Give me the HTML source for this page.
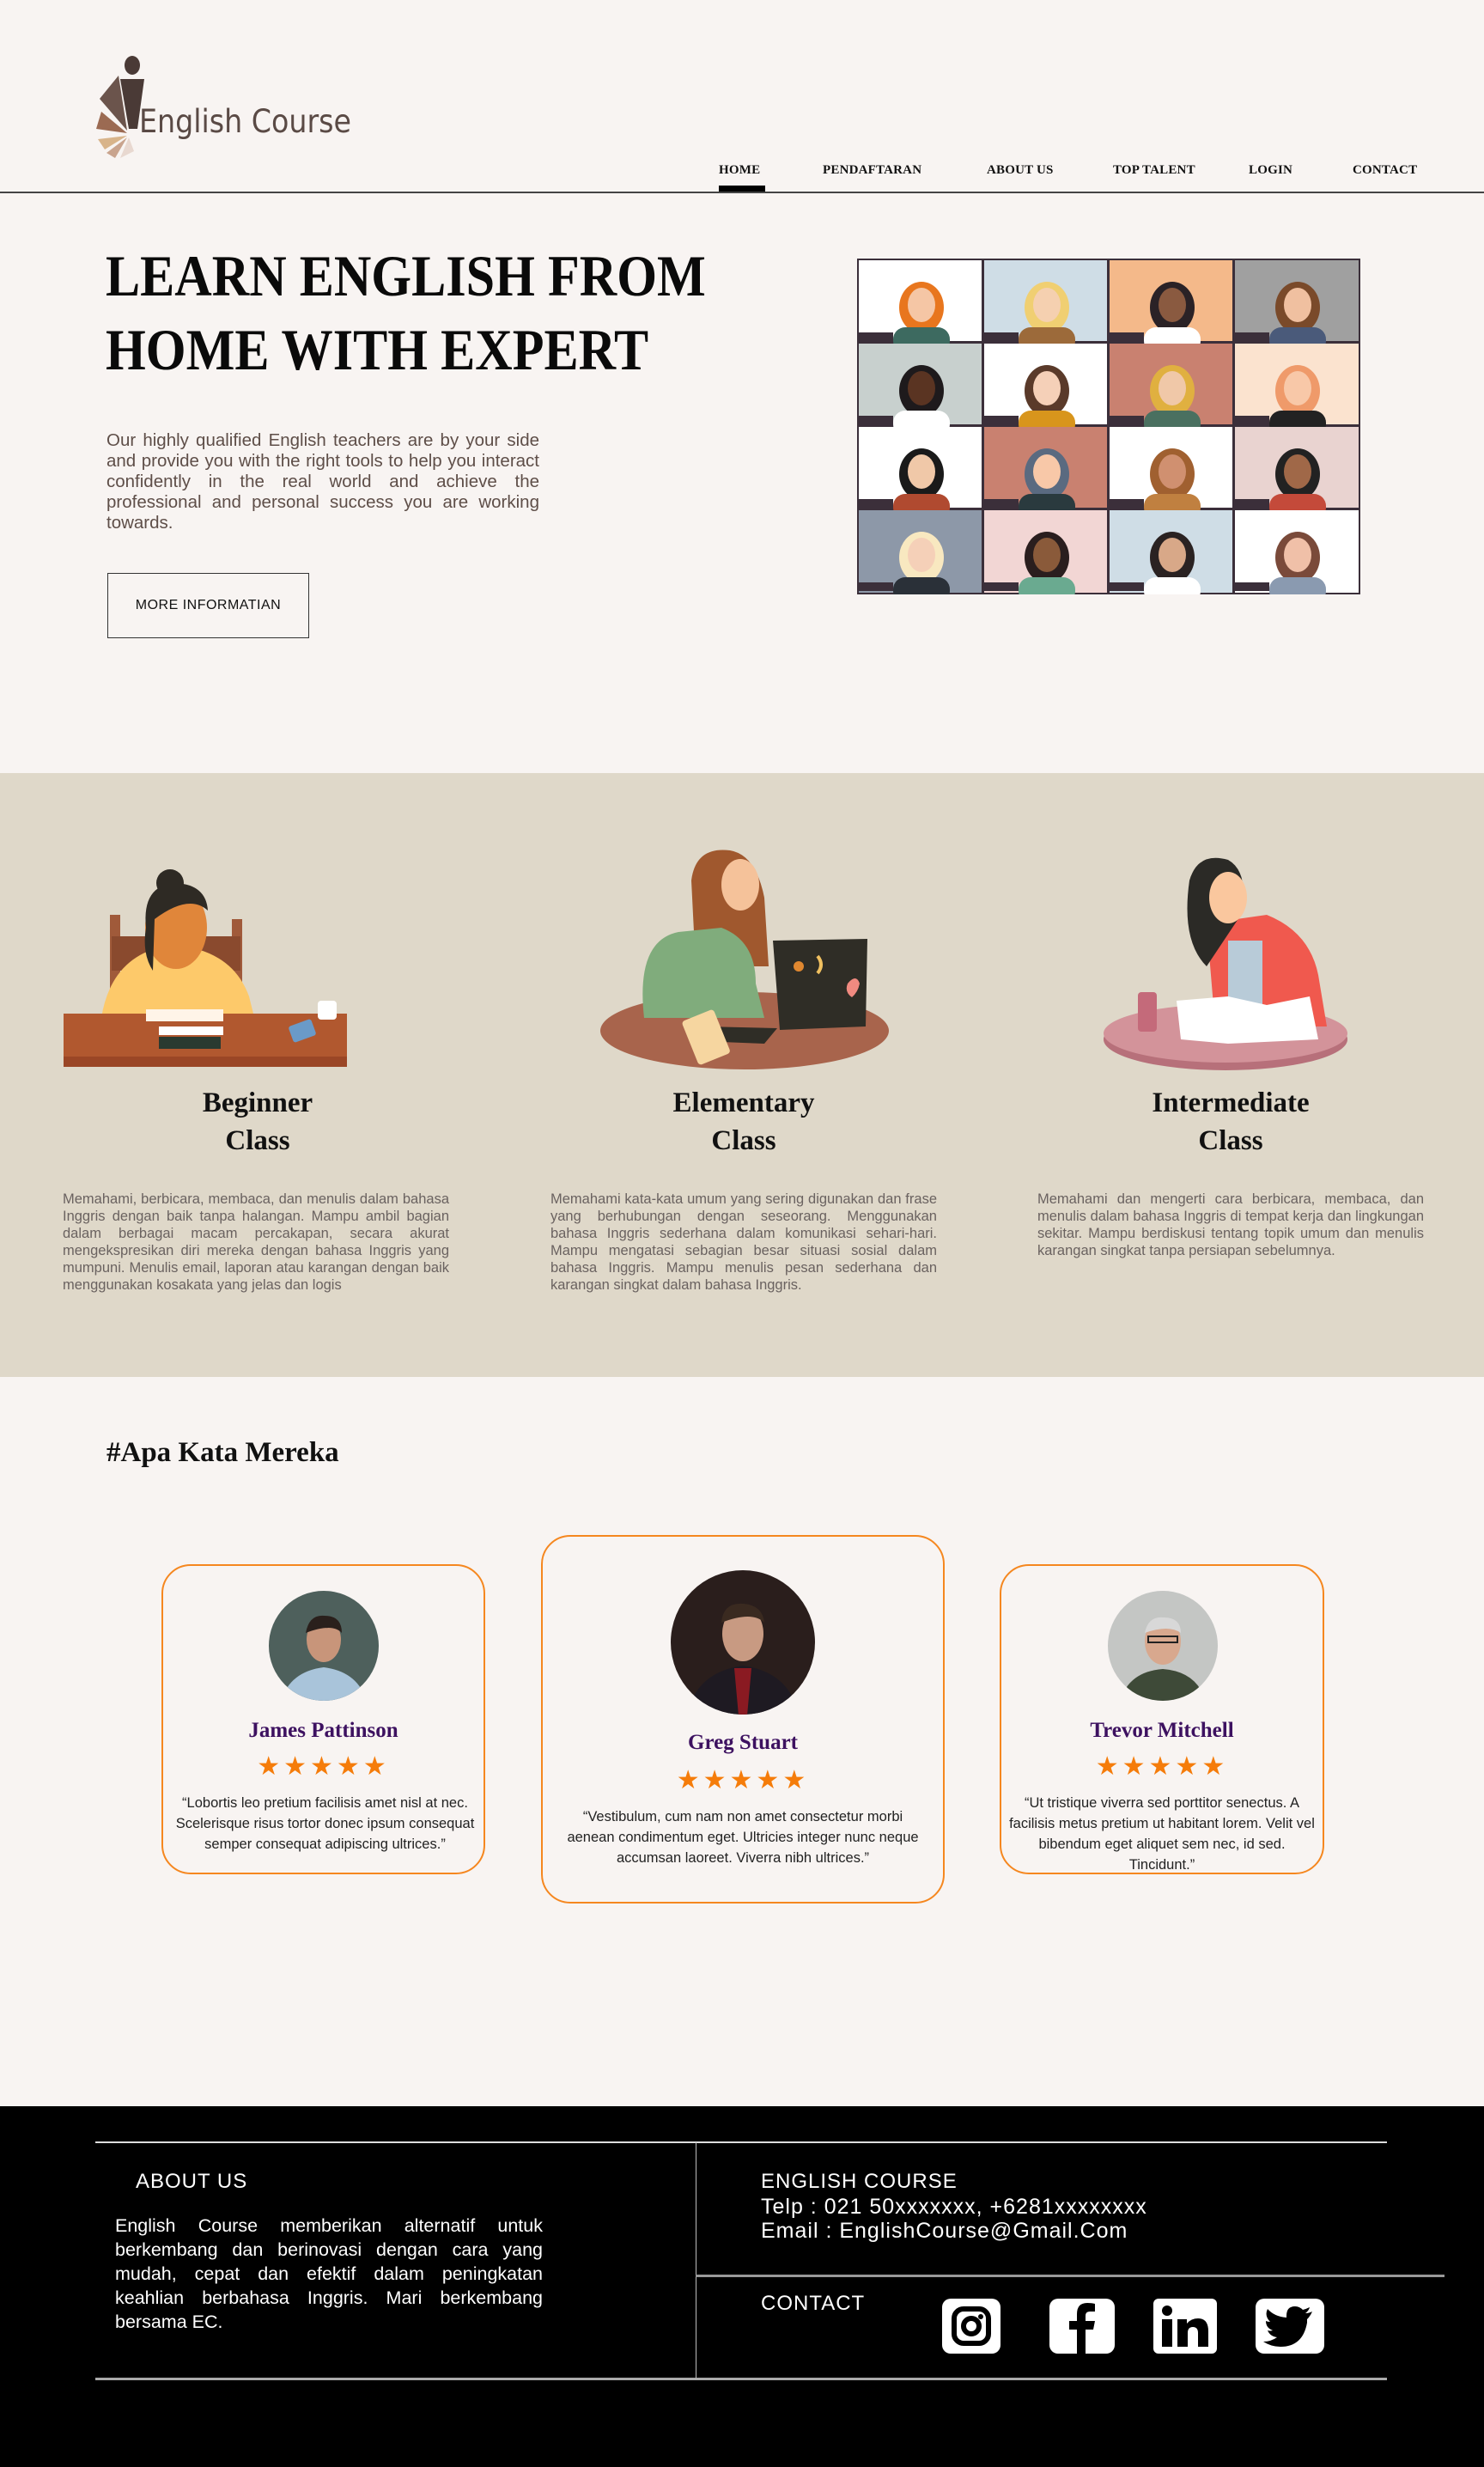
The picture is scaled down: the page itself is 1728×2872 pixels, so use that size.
<!DOCTYPE html>
<html><head><meta charset="utf-8">
<style>
*{margin:0;padding:0;box-sizing:border-box}
body{width:1728px;height:2872px;position:relative;background:#f8f4f2;font-family:"Liberation Sans",sans-serif;overflow:hidden}
.a{position:absolute}
.serif{font-family:"Liberation Serif",serif}
.nav{top:190px;font-family:"Liberation Serif",serif;font-weight:bold;font-size:15px;color:#111;letter-spacing:0.2px}
.desc{font-size:16.5px;line-height:20px;color:#6a6260;text-align:justify;width:450px}
.card{border:2px solid #f5871f;border-radius:34px;background:#f8f4f2}
.name{font-family:"Liberation Serif",serif;font-weight:bold;color:#3d1160;font-size:25px;text-align:center;width:100%}
.stars{color:#f57c0a;font-size:30px;letter-spacing:4px;text-align:center;width:100%}
.quote{font-size:16.5px;line-height:24px;color:#222;text-align:center;width:100%}
.ft{color:#fff;font-size:24px;letter-spacing:1px}
</style></head><body>

<svg class="a" style="left:110px;top:60px" width="80" height="125" viewBox="0 0 80 125">
<ellipse cx="44" cy="16" rx="9" ry="11" fill="#4a3a36"/>
<polygon points="30,32 58,32 50,90 40,90" fill="#4a3a36"/>
<polygon points="6,55 28,28 38,92" fill="#6b544c"/>
<polygon points="2,90 38,95 8,70" fill="#9b6a52"/>
<polygon points="4,102 38,98 12,114" fill="#d8b48a"/>
<polygon points="14,118 38,100 24,124" fill="#c9a48e"/>
<polygon points="30,124 40,100 46,116" fill="#e8d8d0"/>
</svg>
<div class="a" style="left:162px;top:120px;font-size:37px;color:#5a4a45;font-family:'DejaVu Sans Condensed','Liberation Sans',sans-serif">English Course</div>

<div class="a nav" style="left:837px">HOME</div>
<div class="a" style="left:837px;top:216px;width:54px;height:8px;background:#000"></div>
<div class="a nav" style="left:958px">PENDAFTARAN</div>
<div class="a nav" style="left:1149px">ABOUT US</div>
<div class="a nav" style="left:1296px">TOP TALENT</div>
<div class="a nav" style="left:1454px">LOGIN</div>
<div class="a nav" style="left:1575px">CONTACT</div>
<div class="a" style="left:0;top:223px;width:1728px;height:2px;background:#444"></div>

<div class="a serif" style="left:123px;top:278px;font-size:68px;line-height:86px;font-weight:bold;color:#0a0a0a;transform:scaleX(0.885);transform-origin:0 0;white-space:nowrap">LEARN ENGLISH FROM<br>HOME WITH EXPERT</div>
<div class="a" style="left:124px;top:501px;width:504px;font-size:20.5px;line-height:24px;color:#5e4e48;text-align:justify">Our highly qualified English teachers are by your side and provide you with the right tools to help you interact confidently in the real world and achieve the professional and personal success you are working towards.</div>
<div class="a" style="left:125px;top:667px;width:235px;height:76px;border:1.5px solid #333;font-size:16px;color:#111;text-align:center;line-height:73px;letter-spacing:0.5px">MORE INFORMATIAN</div>

<svg class="a" style="left:998px;top:301px" width="586" height="391" viewBox="0 0 586 391">
<rect width="586" height="391" fill="#3b2f3a"/>
<defs>
<g id="p"><ellipse cx="73" cy="55" rx="26" ry="30" fill="var(--h)"/><rect x="40" y="78" width="66" height="30" rx="14" fill="var(--b)"/><ellipse cx="73" cy="52" rx="16" ry="20" fill="var(--s)"/><rect x="0" y="84" width="40" height="10" fill="#3b2f3a"/></g>
</defs>
<g transform="translate(2,2)"><rect width="143" height="94" fill="#fff"/><use href="#p" style="--h:#e8761e;--b:#3d6a60;--s:#f5c6a5"/></g>
<g transform="translate(148,2)"><rect width="143" height="94" fill="#cfdde6"/><use href="#p" style="--h:#f0cf72;--b:#9c6a3a;--s:#f5d0b0"/></g>
<g transform="translate(294,2)"><rect width="143" height="94" fill="#f4b98a"/><use href="#p" style="--h:#2a2226;--b:#fff;--s:#8a5a40"/></g>
<g transform="translate(440,2)"><rect width="144" height="94" fill="#a0a0a0"/><use href="#p" style="--h:#7a4a2a;--b:#4a5a7a;--s:#f0c0a0"/></g>
<g transform="translate(2,99)"><rect width="143" height="94" fill="#c8d0ce"/><use href="#p" style="--h:#1e1a1c;--b:#fff;--s:#5a3422"/></g>
<g transform="translate(148,99)"><rect width="143" height="94" fill="#fff"/><use href="#p" style="--h:#5a3a2a;--b:#d8951c;--s:#f5d0b8"/></g>
<g transform="translate(294,99)"><rect width="143" height="94" fill="#c98170"/><use href="#p" style="--h:#e0b040;--b:#4a7060;--s:#f0c8a8"/></g>
<g transform="translate(440,99)"><rect width="144" height="94" fill="#fbe3cf"/><use href="#p" style="--h:#ef9a6a;--b:#222;--s:#f8c8a8"/></g>
<g transform="translate(2,196)"><rect width="143" height="94" fill="#fff"/><use href="#p" style="--h:#1a1a1a;--b:#b04a30;--s:#f0c8a8"/></g>
<g transform="translate(148,196)"><rect width="143" height="94" fill="#c98170"/><use href="#p" style="--h:#5a6a80;--b:#2a3a3e;--s:#f8c8a8"/></g>
<g transform="translate(294,196)"><rect width="143" height="94" fill="#fff"/><use href="#p" style="--h:#a06030;--b:#c08040;--s:#d09070"/></g>
<g transform="translate(440,196)"><rect width="144" height="94" fill="#e9d3d0"/><use href="#p" style="--h:#222;--b:#c44a3a;--s:#a06848"/></g>
<g transform="translate(2,293)"><rect width="143" height="96" fill="#8d98a8"/><use href="#p" style="--h:#f8e8c0;--b:#2a3038;--s:#f5d0b8"/></g>
<g transform="translate(148,293)"><rect width="143" height="96" fill="#f2d6d4"/><use href="#p" style="--h:#2a1e1e;--b:#6aaa90;--s:#8a5a3a"/></g>
<g transform="translate(294,293)"><rect width="143" height="96" fill="#cfdde6"/><use href="#p" style="--h:#2a2222;--b:#fff;--s:#d8a888"/></g>
<g transform="translate(440,293)"><rect width="144" height="96" fill="#fff"/><use href="#p" style="--h:#7a4a3a;--b:#8a9ab0;--s:#f0c0a8"/></g>
</svg>

<div class="a" style="left:0;top:900px;width:1728px;height:703px;background:#dfd8c9"></div>

<svg class="a" style="left:70px;top:1010px" width="340" height="250" viewBox="0 0 340 250">
<rect x="58" y="55" width="12" height="110" fill="#a05a3a"/><rect x="200" y="60" width="12" height="100" fill="#a05a3a"/>
<rect x="60" y="80" width="150" height="40" fill="#8a4a2e"/>
<path d="M48 175 Q60 100 130 90 Q200 95 220 150 L230 190 L45 190Z" fill="#fdc96a"/>
<ellipse cx="135" cy="70" rx="36" ry="48" fill="#e0863a"/>
<path d="M100 70 Q95 20 135 18 Q170 20 172 50 Q150 30 110 60 L108 120 Q95 100 100 70Z" fill="#2e2a24"/>
<circle cx="128" cy="18" r="16" fill="#2e2a24"/>
<rect x="4" y="170" width="330" height="60" fill="#b1582f"/><rect x="4" y="220" width="330" height="12" fill="#9a4626"/>
<rect x="100" y="165" width="90" height="14" fill="#fff4e8"/><rect x="115" y="185" width="75" height="10" fill="#fff"/><rect x="115" y="197" width="72" height="14" fill="#2a3a30"/>
<rect x="268" y="180" width="28" height="20" rx="3" fill="#6a9ac8" transform="rotate(-20 282 190)"/>
<rect x="300" y="155" width="22" height="22" rx="4" fill="#fff"/>
</svg>

<svg class="a" style="left:690px;top:985px" width="360" height="260" viewBox="0 0 360 260">
<ellipse cx="177" cy="215" rx="168" ry="45" fill="#a8644c"/>
<path d="M115 40 Q120 0 160 5 Q190 10 200 60 L205 140 L120 140Z" fill="#a0582e"/>
<ellipse cx="172" cy="45" rx="22" ry="30" fill="#f5c29a"/>
<path d="M60 200 Q50 110 100 100 L150 95 Q190 110 190 160 L200 200Z" fill="#80ac7c"/>
<path d="M210 110 L320 108 L318 210 L218 214Z" fill="#2f2d26"/>
<polygon points="130,210 215,212 200,230 150,228" fill="#2f2d26"/>
<rect x="112" y="195" width="40" height="55" rx="4" fill="#f6d6a0" transform="rotate(-22 132 222)"/>
<path d="M297 160 q10-12 14 0 q-2 10-9 16 q-9-6-5-16z" fill="#f08a80"/>
<circle cx="240" cy="140" r="6" fill="#e08830"/><path d="M262 128 q8 10 0 20" stroke="#f0c060" stroke-width="4" fill="none"/>
</svg>

<svg class="a" style="left:1255px;top:995px" width="360" height="260" viewBox="0 0 360 260">
<ellipse cx="172" cy="215" rx="142" ry="36" fill="#b7707a"/>
<ellipse cx="172" cy="208" rx="142" ry="34" fill="#d3939a"/>
<path d="M150 80 L220 70 Q270 90 280 140 L290 200 L160 200Z" fill="#f0594e"/>
<rect x="175" y="100" width="40" height="100" fill="#b8cbd8"/>
<path d="M130 30 Q140 -4 175 6 Q200 20 190 70 L150 130 Q120 100 130 30Z" fill="#2b2a26"/>
<ellipse cx="175" cy="50" rx="22" ry="30" fill="#fac79e"/>
<path d="M115 170 L175 165 L220 175 L270 165 L280 215 L175 220 L120 215Z" fill="#fff"/>
<rect x="70" y="160" width="22" height="46" rx="4" fill="#c46a7a"/>
</svg>

<div class="a serif" style="left:150px;top:1262px;width:300px;text-align:center;font-size:33px;line-height:44px;font-weight:bold;color:#111">Beginner<br>Class</div>
<div class="a serif" style="left:716px;top:1262px;width:300px;text-align:center;font-size:33px;line-height:44px;font-weight:bold;color:#111">Elementary<br>Class</div>
<div class="a serif" style="left:1283px;top:1262px;width:300px;text-align:center;font-size:33px;line-height:44px;font-weight:bold;color:#111">Intermediate<br>Class</div>

<div class="a desc" style="left:73px;top:1386px">Memahami, berbicara, membaca, dan menulis dalam bahasa Inggris dengan baik tanpa halangan. Mampu ambil bagian dalam berbagai macam percakapan, secara akurat mengekspresikan diri mereka dengan bahasa Inggris yang mumpuni. Menulis email, laporan atau karangan dengan baik menggunakan kosakata yang jelas dan logis</div>
<div class="a desc" style="left:641px;top:1386px">Memahami kata-kata umum yang sering digunakan dan frase yang berhubungan dengan seseorang. Menggunakan bahasa Inggris sederhana dalam komunikasi sehari-hari. Mampu mengatasi sebagian besar situasi sosial dalam bahasa Inggris. Mampu menulis pesan sederhana dan karangan singkat dalam bahasa Inggris.</div>
<div class="a desc" style="left:1208px;top:1386px">Memahami dan mengerti cara berbicara, membaca, dan menulis dalam bahasa Inggris di tempat kerja dan lingkungan sekitar. Mampu berdiskusi tentang topik umum dan menulis karangan singkat tanpa persiapan sebelumnya.</div>

<div class="a serif" style="left:124px;top:1673px;font-size:33px;font-weight:bold;color:#111">#Apa Kata Mereka</div>

<div class="a card" style="left:188px;top:1821px;width:377px;height:361px">
 <svg class="a" style="left:122px;top:28px" width="130" height="130"><clipPath id="c1"><circle cx="65" cy="65" r="64"/></clipPath><g clip-path="url(#c1)"><rect width="130" height="130" fill="#4e605c"/><path d="M15 130 Q25 95 65 90 Q105 95 115 130Z" fill="#a9c4da"/><ellipse cx="65" cy="58" rx="20" ry="26" fill="#c8957a"/><path d="M44 50 Q48 28 66 30 Q86 30 86 50 Q75 38 44 50Z" fill="#2a201c"/></g></svg>
 <div class="a name" style="top:178px">James Pattinson</div>
 <div class="a stars" style="top:216px">★★★★★</div>
 <div class="a quote" style="top:264px;left:-4px;width:385px">“Lobortis leo pretium facilisis amet nisl at nec. Scelerisque risus tortor donec ipsum consequat semper consequat adipiscing ultrices.”</div>
</div>
<div class="a card" style="left:630px;top:1787px;width:470px;height:429px">
 <svg class="a" style="left:148px;top:38px" width="170" height="170"><clipPath id="c2"><circle cx="85" cy="85" r="84"/></clipPath><g clip-path="url(#c2)"><rect width="170" height="170" fill="#2a1e1c"/><path d="M20 170 Q30 120 85 112 Q140 120 150 170Z" fill="#1e1a22"/><polygon points="75,115 95,115 90,170 80,170" fill="#8a1a22"/><ellipse cx="85" cy="75" rx="24" ry="32" fill="#c89a82"/><path d="M60 62 Q62 38 86 40 Q108 42 110 62 Q96 48 60 62Z" fill="#3a2a20"/></g></svg>
 <div class="a name" style="top:226px">Greg Stuart</div>
 <div class="a stars" style="top:266px">★★★★★</div>
 <div class="a quote" style="top:314px;padding:0 20px">“Vestibulum, cum nam non amet consectetur morbi aenean condimentum eget. Ultricies integer nunc neque accumsan laoreet. Viverra nibh ultrices.”</div>
</div>
<div class="a card" style="left:1164px;top:1821px;width:378px;height:361px">
 <svg class="a" style="left:123px;top:28px" width="130" height="130"><clipPath id="c3"><circle cx="65" cy="65" r="64"/></clipPath><g clip-path="url(#c3)"><rect width="130" height="130" fill="#c4c6c4"/><path d="M15 130 Q25 95 65 92 Q105 95 115 130Z" fill="#3e4a38"/><ellipse cx="65" cy="60" rx="21" ry="27" fill="#d8a88e"/><path d="M44 50 Q48 30 66 32 Q86 32 86 50 Q72 40 44 50Z" fill="#d8d8d8"/><rect x="48" y="54" width="34" height="7" fill="none" stroke="#222" stroke-width="2"/></g></svg>
 <div class="a name" style="top:178px">Trevor Mitchell</div>
 <div class="a stars" style="top:216px">★★★★★</div>
 <div class="a quote" style="top:264px;padding:0 6px">“Ut tristique viverra sed porttitor senectus. A facilisis metus pretium ut habitant lorem. Velit vel bibendum eget aliquet sem nec, id sed. Tincidunt.”</div>
</div>

<div class="a" style="left:0;top:2452px;width:1728px;height:420px;background:#000"></div>
<div class="a" style="left:111px;top:2493px;width:1504px;height:2px;background:#ddd"></div>
<div class="a" style="left:111px;top:2768px;width:1504px;height:3px;background:#aaa"></div>
<div class="a" style="left:810px;top:2494px;width:1px;height:275px;background:#bbb"></div>
<div class="a" style="left:810px;top:2648px;width:872px;height:3px;background:#999"></div>
<div class="a ft" style="left:158px;top:2526px">ABOUT US</div>
<div class="a" style="left:134px;top:2577px;width:498px;font-size:21.5px;line-height:28px;color:#fff;text-align:justify">English Course memberikan alternatif untuk berkembang dan berinovasi dengan cara yang mudah, cepat dan efektif dalam peningkatan keahlian berbahasa Inggris. Mari berkembang bersama EC.</div>
<div class="a ft" style="left:886px;top:2526px">ENGLISH COURSE</div>
<div class="a ft" style="left:886px;top:2555px;font-size:25px">Telp : 021 50xxxxxxx, +6281xxxxxxxx</div>
<div class="a ft" style="left:886px;top:2583px;font-size:25px">Email : EnglishCourse@Gmail.Com</div>
<div class="a ft" style="left:886px;top:2668px">CONTACT</div>

<svg class="a" style="left:1097px;top:2676px" width="68" height="64" viewBox="0 0 68 64"><rect width="68" height="64" rx="10" fill="#fff"/><rect x="14" y="12" width="40" height="40" rx="11" fill="none" stroke="#000" stroke-width="6"/><circle cx="34" cy="32" r="9" fill="none" stroke="#000" stroke-width="6"/><circle cx="45" cy="21" r="3" fill="#000"/></svg>
<svg class="a" style="left:1222px;top:2676px" width="76" height="64" viewBox="0 0 76 64"><rect width="76" height="64" rx="10" fill="#fff"/><path d="M42 64 V36 H51 L53 26 H42 V20 Q42 15 47 15 H53 V6 Q49 5 44 5 Q32 5 32 18 V26 H23 V36 H32 V64Z" fill="#000"/></svg>
<svg class="a" style="left:1343px;top:2676px" width="74" height="64" viewBox="0 0 74 64"><rect width="74" height="64" rx="6" fill="#fff"/><circle cx="16" cy="14" r="6" fill="#000"/><rect x="10" y="24" width="12" height="32" fill="#000"/><path d="M28 24 H39 V29 Q44 23 52 23 Q64 23 64 38 V56 H52 V40 Q52 33 46 33 Q40 33 40 40 V56 H28Z" fill="#000"/></svg>
<svg class="a" style="left:1462px;top:2676px" width="80" height="64" viewBox="0 0 80 64"><rect width="80" height="64" rx="10" fill="#fff"/><path d="M66 15 Q62 17 58 17 Q62 14 63 10 Q59 12 55 13 Q51 9 46 9 Q36 9 36 20 L36 22 Q22 21 14 12 Q10 20 17 27 Q14 27 12 26 Q12 34 20 37 Q17 38 14 37 Q17 44 25 45 Q18 50 9 50 Q18 56 29 56 Q55 56 60 28 L60 24 Q64 20 66 15Z" fill="#000"/></svg>
</body></html>
